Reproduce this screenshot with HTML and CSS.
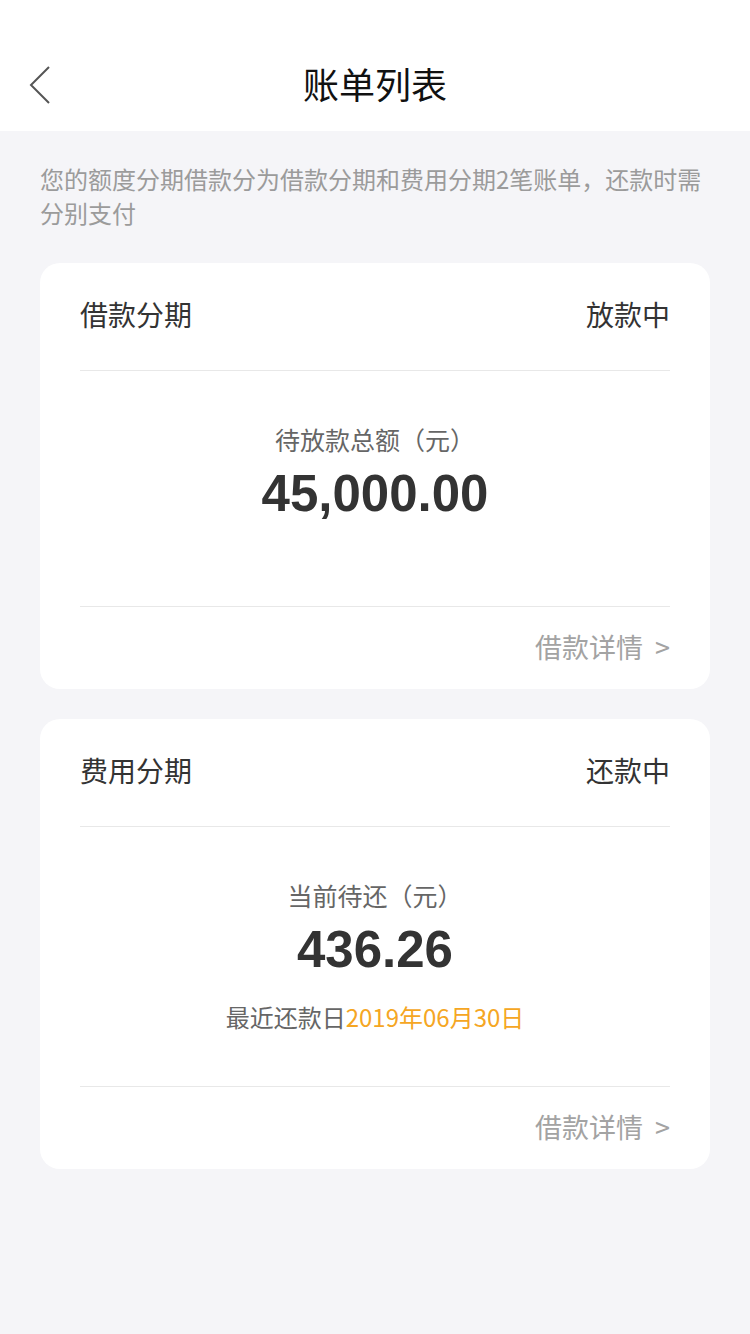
FILE: index.html
```html
<!DOCTYPE html>
<html lang="zh-CN">
<head>
<meta charset="utf-8">
<title>账单列表</title>
<link rel="stylesheet" href="styles.css">
</head>
<body>
<header class="topbar">
  <div class="nav">
    <span class="back" aria-label="返回">
      <svg width="24" height="40" viewBox="0 0 24 40"><path d="M21 2 L3 20 L21 38" fill="none" stroke="#555" stroke-width="2"/></svg>
    </span>
    <h1 class="title">账单列表</h1>
  </div>
</header>
<main class="content">
  <p class="intro">您的额度分期借款分为借款分期和费用分期2笔账单，还款时需分别支付</p>

  <section class="card">
    <div class="card-head">
      <span class="card-name">借款分期</span>
      <span class="card-status">放款中</span>
    </div>
    <div class="card-body card-body--loan">
      <div class="amount-label">待放款总额（元）</div>
      <div class="amount">45,000.00</div>
    </div>
    <div class="card-foot">
      <span class="detail-link">借款详情<span class="arrow">&gt;</span></span>
    </div>
  </section>

  <section class="card">
    <div class="card-head">
      <span class="card-name">费用分期</span>
      <span class="card-status">还款中</span>
    </div>
    <div class="card-body card-body--fee">
      <div class="amount-label">当前待还（元）</div>
      <div class="amount">436.26</div>
      <div class="due">最近还款日<span class="due-date">2019年06月30日</span></div>
    </div>
    <div class="card-foot">
      <span class="detail-link">借款详情<span class="arrow">&gt;</span></span>
    </div>
  </section>
</main>
</body>
</html>
```

FILE: styles.css
```css
* { box-sizing: border-box; }
html, body {
  margin: 0;
  padding: 0;
}
body {
  width: 750px;
  min-height: 1334px;
  background: #f5f5f8;
  font-family: "Noto Sans CJK SC", "Noto Sans", sans-serif;
  color: #333;
}
.topbar {
  background: #fff;
  padding-top: 37px;
  padding-bottom: 2px;
}
.nav {
  position: relative;
  height: 92px;
  display: flex;
  align-items: center;
  justify-content: center;
}
.back {
  position: absolute;
  left: 28px;
  top: 50%;
  transform: translateY(-50%);
  margin-top: 2px;
  display: flex;
}
.title {
  margin: 0;
  font-size: 36px;
  font-weight: 400;
  color: #111;
  line-height: 50px;
}
.content {
  padding: 31px 40px 40px;
  display: flex;
  flex-direction: column;
}
.intro {
  margin: 0 0 33px;
  font-size: 24px;
  line-height: 34px;
  color: #9b9b9b;
}
.card {
  background: #fff;
  border-radius: 20px;
  padding: 0 40px;
  margin-bottom: 30px;
}
.card-head {
  height: 108px;
  padding-bottom: 6px;
  display: flex;
  align-items: center;
  justify-content: space-between;
  border-bottom: 1px solid #e8e8e8;
  font-size: 28px;
  color: #333;
}
.card-body {
  display: flex;
  flex-direction: column;
  align-items: center;
  padding-top: 51px;
  border-bottom: 1px solid #e8e8e8;
}
.card-body--loan { padding-bottom: 84px; }
.card-body--fee { padding-bottom: 52px; }
.amount-label {
  font-size: 25px;
  line-height: 34px;
  color: #666;
}
.amount {
  margin-top: 10px;
  font-family: "Liberation Sans", Arial, sans-serif;
  font-weight: 700;
  font-size: 51px;
  line-height: 56px;
  color: #333;
}
.due {
  margin-top: 22px;
  font-size: 24px;
  line-height: 34px;
  color: #666;
}
.due-date { color: #f5a623; }
.card-foot {
  height: 82px;
  padding-bottom: 4px;
  display: flex;
  align-items: center;
  justify-content: flex-end;
}
.detail-link {
  font-size: 27px;
  color: #a3a3a3;
}
.arrow {
  margin-left: 12px;
}
```
